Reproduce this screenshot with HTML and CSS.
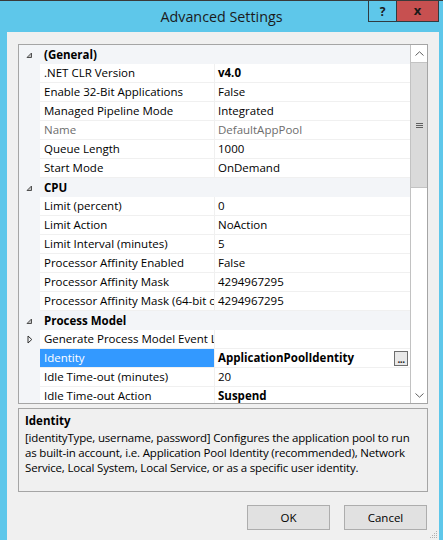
FILE: index.html
```html
<!DOCTYPE html>
<html>
<head>
<meta charset="utf-8">
<title>Advanced Settings</title>
<link rel="stylesheet" href="styles.css">
</head>
<body>
<div class="window">
  <div class="titlebar">
    <div class="tb-spacer"></div>
    <div class="title">Advanced Settings</div>
    <div class="caption-btns">
      <div class="cbtn help">?</div>
      <div class="cbtn close">x</div>
    </div>
  </div>
  <div class="client">
    <div class="grid">
      <div class="rows">
        <div class="cat"><span class="gut"><svg class="exp" width="7" height="7" viewBox="0 0 7 7"><path d="M5.5 1 L5.5 5.5 L1 5.5 Z"/></svg></span><span class="catname">(General)</span></div>
        <div class="row"><span class="gut"></span><span class="name">.NET CLR Version</span><span class="val b">v4.0</span></div>
        <div class="row"><span class="gut"></span><span class="name">Enable 32-Bit Applications</span><span class="val">False</span></div>
        <div class="row"><span class="gut"></span><span class="name">Managed Pipeline Mode</span><span class="val">Integrated</span></div>
        <div class="row dim"><span class="gut"></span><span class="name">Name</span><span class="val">DefaultAppPool</span></div>
        <div class="row"><span class="gut"></span><span class="name">Queue Length</span><span class="val">1000</span></div>
        <div class="row"><span class="gut"></span><span class="name">Start Mode</span><span class="val">OnDemand</span></div>
        <div class="cat"><span class="gut"><svg class="exp" width="7" height="7" viewBox="0 0 7 7"><path d="M5.5 1 L5.5 5.5 L1 5.5 Z"/></svg></span><span class="catname">CPU</span></div>
        <div class="row"><span class="gut"></span><span class="name">Limit (percent)</span><span class="val">0</span></div>
        <div class="row"><span class="gut"></span><span class="name">Limit Action</span><span class="val">NoAction</span></div>
        <div class="row"><span class="gut"></span><span class="name">Limit Interval (minutes)</span><span class="val">5</span></div>
        <div class="row"><span class="gut"></span><span class="name">Processor Affinity Enabled</span><span class="val">False</span></div>
        <div class="row"><span class="gut"></span><span class="name">Processor Affinity Mask</span><span class="val">4294967295</span></div>
        <div class="row"><span class="gut"></span><span class="name">Processor Affinity Mask (64-bit option)</span><span class="val">4294967295</span></div>
        <div class="cat"><span class="gut"><svg class="exp" width="7" height="7" viewBox="0 0 7 7"><path d="M5.5 1 L5.5 5.5 L1 5.5 Z"/></svg></span><span class="catname">Process Model</span></div>
        <div class="row"><span class="gut"><svg class="col" width="6" height="9" viewBox="0 0 6 9"><path d="M1 1 L4.8 4.5 L1 8 Z"/></svg></span><span class="name">Generate Process Model Event Log Entry</span><span class="val"></span></div>
        <div class="row sel"><span class="gut"></span><span class="name">Identity</span><span class="val b">ApplicationPoolIdentity<span class="ell">...</span></span></div>
        <div class="row"><span class="gut"></span><span class="name">Idle Time-out (minutes)</span><span class="val">20</span></div>
        <div class="row"><span class="gut"></span><span class="name">Idle Time-out Action</span><span class="val b">Suspend</span></div>
      </div>
      <div class="scrollbar">
        <div class="sb-btn up"><svg width="9" height="5" viewBox="0 0 9 5"><path d="M0.5 4.5 L4.5 0.8 L8.5 4.5"/></svg></div>
        <div class="thumb"><svg width="7" height="5" viewBox="0 0 7 5"><path d="M0 0.5 H7 M0 2.5 H7 M0 4.5 H7"/></svg></div>
        <div class="track"></div>
        <div class="sb-btn down"><svg width="9" height="5" viewBox="0 0 9 5"><path d="M0.5 0.5 L4.5 4.2 L8.5 0.5"/></svg></div>
      </div>
    </div>
    <div class="desc">
      <div class="desc-title">Identity</div>
      <div class="desc-text">[identityType, username, password] Configures the application pool to run as built-in account, i.e. Application Pool Identity (recommended), Network Service, Local System, Local Service, or as a specific user identity.</div>
    </div>
    <div class="buttons">
      <div class="btn">OK</div>
      <div class="btn">Cancel</div>
    </div>
    <svg class="grip" width="8" height="8" viewBox="0 0 8 8"><g fill="#b0b0b0"><rect x="6" y="0" width="1" height="1"/><rect x="4" y="2" width="1" height="1"/><rect x="6" y="2" width="1" height="1"/><rect x="2" y="4" width="1" height="1"/><rect x="4" y="4" width="1" height="1"/><rect x="6" y="4" width="1" height="1"/><rect x="0" y="6" width="1" height="1"/><rect x="2" y="6" width="1" height="1"/><rect x="4" y="6" width="1" height="1"/><rect x="6" y="6" width="1" height="1"/></g></svg>
  </div>
</div>
</body>
</html>
```

FILE: styles.css
```css
html, body {
  margin: 0;
  padding: 0;
}
body {
  width: 443px;
  height: 540px;
  overflow: hidden;
  background: #5ec7ea;
  font-family: "Open Sans", "Noto Sans", sans-serif;
  font-size: 11.5px;
  color: #000;
}
.window {
  height: 540px;
  box-sizing: border-box;
  border-top: 1px solid #3a3a3a;
  display: flex;
  flex-direction: column;
}
.titlebar {
  height: 31px;
  display: grid;
  grid-template-columns: 75px 1fr 75px;
  flex: none;
}
.title {
  text-align: center;
  font-size: 14.3px;
  line-height: 31px;
  color: #1b1b1b;
}
.caption-btns {
  display: flex;
  align-items: flex-start;
  justify-content: flex-end;
  padding-right: 4px;
}
.cbtn {
  height: 21px;
  box-sizing: border-box;
  border: 1px solid #2f3b40;
  border-top: none;
  display: flex;
  align-items: center;
  justify-content: center;
  font-weight: bold;
  color: #1a1a1a;
}
.help {
  width: 28px;
  border-right: none;
  font-size: 12px;
}
.close {
  width: 43px;
  background: #c75050;
  font-size: 13px;
  line-height: 1;
  padding-bottom: 2px;
}
.client {
  flex: 1;
  margin: 0 4px 0 7px;
  background: #f0f0f0;
  padding: 12px 11px 0;
  display: flex;
  flex-direction: column;
  position: relative;
}
.grid {
  height: 360px;
  box-sizing: border-box;
  border: 1px solid #a5a5a5;
  background: #fff;
  display: flex;
  flex: none;
}
.rows {
  flex: 1;
  overflow: hidden;
}
.row, .cat {
  display: flex;
  height: 19px;
}
.cat {
  background: #f3f5f8;
  align-items: center;
}
.gut {
  width: 21px;
  flex: none;
  background: #f3f5f8;
  display: flex;
  align-items: center;
  height: 19px;
}
.exp {
  margin-left: 7px;
  margin-top: 1px;
}
.exp path {
  fill: #c4c4c4;
  stroke: #505050;
  stroke-width: 1;
}
.col {
  margin-left: 8px;
}
.col path {
  fill: none;
  stroke: #303030;
  stroke-width: 1;
}
.catname {
  font-weight: bold;
  padding-left: 4px;
  line-height: 19px;
}
.name {
  width: 175px;
  flex: none;
  box-sizing: border-box;
  border-bottom: 1px solid #f0f0f0;
  border-right: 1px solid #f0f0f0;
  padding-left: 4px;
  line-height: 18px;
  white-space: nowrap;
  overflow: hidden;
}
.val {
  flex: 1;
  min-width: 0;
  box-sizing: border-box;
  border-bottom: 1px solid #f0f0f0;
  padding-left: 3px;
  padding-right: 2px;
  line-height: 18px;
  white-space: nowrap;
  overflow: hidden;
  display: flex;
  align-items: center;
}
.b {
  font-weight: bold;
}
.dim .name, .dim .val {
  color: #6d6d6d;
}
.sel .name {
  background: #3399ff;
  color: #fff;
}
.ell {
  margin-left: auto;
  width: 14px;
  height: 15px;
  box-sizing: border-box;
  border: 1px solid #6e6e6e;
  background: #e9e9e9;
  font-size: 10px;
  font-weight: bold;
  line-height: 15px;
  text-align: center;
  letter-spacing: -0.5px;
  color: #222;
}
.scrollbar {
  width: 17px;
  box-sizing: border-box;
  border-left: 1px solid #c2c2c2;
  display: flex;
  flex-direction: column;
  flex: none;
}
.sb-btn {
  display: flex;
  align-items: center;
  justify-content: center;
  background: #fff;
}
.sb-btn path {
  fill: none;
  stroke: #606060;
  stroke-width: 1;
}
.up {
  height: 17px;
}
.down {
  height: 16px;
}
.thumb {
  height: 126px;
  box-sizing: border-box;
  background: #dadada;
  border-top: 1px solid #c3c3c3;
  border-bottom: 1px solid #c3c3c3;
  display: flex;
  align-items: center;
  justify-content: center;
}
.thumb path {
  stroke: #606060;
  stroke-width: 1;
}
.track {
  flex: 1;
  background: #fff;
}
.desc {
  margin-top: 4px;
  height: 84px;
  box-sizing: border-box;
  border: 1px solid #a5a5a5;
  padding: 2px 4px 0 6px;
  flex: none;
}
.desc-title {
  font-weight: bold;
  line-height: 19px;
}
.desc-text {
  line-height: 15px;
  letter-spacing: -0.18px;
}
.buttons {
  margin-top: 13px;
  display: flex;
  justify-content: flex-end;
  gap: 14px;
  padding-right: 1px;
}
.btn {
  width: 83px;
  height: 25px;
  box-sizing: border-box;
  background: #e1e1e1;
  border: 1px solid #adadad;
  text-align: center;
  line-height: 23px;
  font-size: 11.5px;
}
.grip {
  position: absolute;
  right: 1px;
  bottom: 1px;
}
```
